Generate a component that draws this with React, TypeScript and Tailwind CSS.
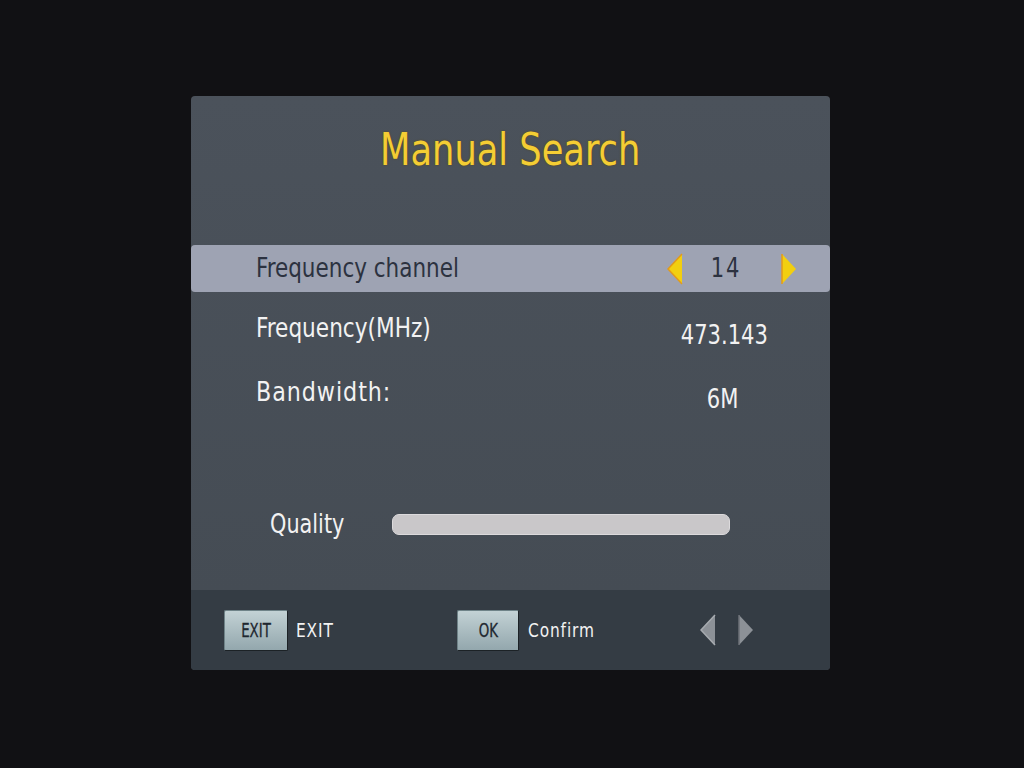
import React from "react"

// Little triangle used for the left/right value selectors
const Arrow = ({ dir, fill, edge }: { dir: "left" | "right"; fill: string; edge: string }) => (
  <svg width="16" height="32" viewBox="0 0 16 32">
    {dir === "left" ? (
      <>
        <polygon points="15,1 15,31 1,16" fill={fill} />
        <polyline points="15,1 1,16 15,31" fill="none" stroke={edge} strokeWidth="1.5" />
      </>
    ) : (
      <>
        <polygon points="1,1 1,31 15,16" fill={fill} />
        <polyline points="1,1 1,31" fill="none" stroke={edge} strokeWidth="1.5" />
      </>
    )}
  </svg>
)

const KeyCap = ({ label, width }: { label: string; width: string }) => (
  <div
    className={`${width} h-[41px] flex items-center justify-center rounded-[2px] border border-[#6f8388] border-b-[#1c2226] border-r-[#1c2226] bg-gradient-to-b from-[#c3d2d5] to-[#93a7ad]`}
  >
    <span className="inline-block [transform:scaleX(0.78)] text-[19px] text-[#1f272f] [-webkit-text-stroke:0.3px_#1f272f]">{label}</span>
  </div>
)

export default function App() {
  return (
    <div
      className="min-h-screen w-full bg-[#111114] pt-[96px] pl-[191px]"
      style={{ fontFamily: '"DejaVu Sans Condensed", "DejaVu Sans", sans-serif' }}
    >
      <div className="w-[639px] h-[574px] flex flex-col rounded-[4px] overflow-hidden bg-gradient-to-b from-[#4b525b] to-[#444b53]">
        {/* title */}
        <div className="h-[149px] flex justify-center pt-[28px]">
          <h1 className="inline-block [transform:scaleX(0.89)] text-[44px] leading-[52px] text-[#f4cd34] [text-shadow:0_0_2px_#5a4a10]">
            Manual Search
          </h1>
        </div>

        {/* selected row */}
        <div className="h-[47px] flex items-center rounded-[4px] bg-[#9ea3b3] pl-[65px] pr-[33px]">
          <span className="flex-1">
            <span className="inline-block origin-left [transform:scaleX(0.92)] text-[26px] text-[#2c3240]">Frequency channel</span>
          </span>
          <Arrow dir="left" fill="#f2cf10" edge="#e29a1a" />
          <span className="w-[98px] text-center pr-[12px]">
            <span className="inline-block [transform:scaleX(0.9)] text-[26px] text-[#2c3240] tracking-[2px]">14</span>
          </span>
          <Arrow dir="right" fill="#f2cf10" edge="#e29a1a" />
        </div>

        <div className="flex items-start pl-[65px] pr-[51px] mt-[20px] text-[#f2f2f2]">
          <span className="flex-1">
            <span className="inline-block origin-left [transform:scaleX(0.925)] text-[26px] leading-[32px]">Frequency(MHz)</span>
          </span>
          <span className="w-[110px] text-center mt-[7px]">
            <span className="inline-block [transform:scaleX(0.9)] text-[26px] leading-[32px]">473.143</span>
          </span>
        </div>

        <div className="flex items-start pl-[65px] pr-[51px] mt-[25px] text-[#f2f2f2]">
          <span className="flex-1">
            <span className="inline-block origin-left [transform:scaleX(0.95)] text-[26px] leading-[32px] tracking-[1px]">Bandwidth:</span>
          </span>
          <span className="w-[110px] text-center mt-[7px] pr-[2px]">
            <span className="inline-block [transform:scaleX(0.9)] text-[26px] leading-[32px]">6M</span>
          </span>
        </div>

        {/* quality */}
        <div className="flex items-center pl-[79px] mt-[90px]">
          <span className="w-[122px]">
            <span className="inline-block origin-left [transform:scaleX(0.89)] text-[26px] text-[#f2f2f2]">Quality</span>
          </span>
          <div className="w-[338px] h-[21px] rounded-[7px] bg-[#c9c7c9] border border-[#dcdadc]" />
        </div>

        {/* footer */}
        <div className="mt-auto h-[80px] flex items-center bg-[#343c44] pl-[33px]">
          <KeyCap label="EXIT" width="w-[64px]" />
          <span className="ml-[8px] w-[161px]">
            <span className="inline-block origin-left [transform:scaleX(0.9)] text-[19px] text-[#f2f2f2] tracking-[1px]">EXIT</span>
          </span>
          <KeyCap label="OK" width="w-[62px]" />
          <span className="ml-[9px] w-[172px]">
            <span className="inline-block origin-left [transform:scaleX(0.9)] text-[19px] text-[#f2f2f2] tracking-[1px]">Confirm</span>
          </span>
          <Arrow dir="left" fill="#8c9197" edge="#a7abb0" />
          <div className="w-[22px]" />
          <Arrow dir="right" fill="#8c9197" edge="#6c7177" />
        </div>
      </div>
    </div>
  )
}
